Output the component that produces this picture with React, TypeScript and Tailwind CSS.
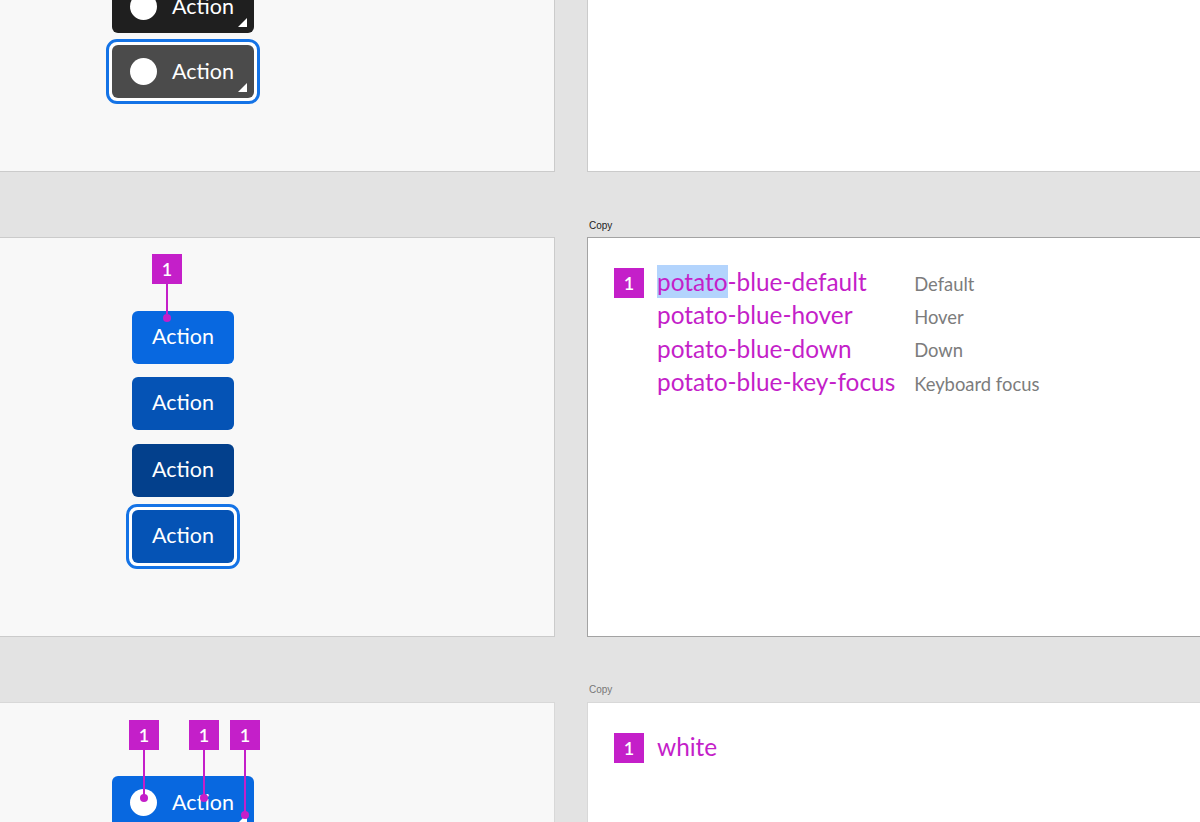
const FONT = "font-['Lato','Open_Sans',sans-serif]";

function Badge({ className = '' }: { className?: string }) {
  return (
    <div className={`flex h-[30px] w-[30px] shrink-0 items-center justify-center bg-[#c41fc9] text-[18px] font-semibold leading-none text-white ${className}`}>
      1
    </div>
  );
}

// annotation: number box, leader line and end dot, laid over the specimen
function Pin({ box, line, dot }: { box: string; line: string; dot: string }) {
  return (
    <>
      <Badge className={`absolute z-10 ${box}`} />
      <div className={`absolute z-10 w-[2px] bg-[#c41fc9] ${line}`} />
      <div className={`absolute z-10 h-[8px] w-[8px] rounded-full bg-[#c41fc9] ${dot}`} />
    </>
  );
}

function Corner() {
  return (
    <svg className="absolute bottom-[6px] right-[7px]" width="9" height="9" viewBox="0 0 9 9">
      <path d="M9 0V9H0Z" fill="#fff" />
    </svg>
  );
}

function IconButton({ color, children }: { color: string; children?: React.ReactNode }) {
  return (
    <div className={`relative flex h-[53px] w-[142px] items-center rounded-[6px] pl-[18px] text-white ${color}`}>
      <div className="h-[27px] w-[27px] rounded-full bg-white" />
      <span className="ml-[15px] text-[21.5px] leading-none">Action</span>
      <Corner />
      {children}
    </div>
  );
}

function TextButton({ color, children }: { color: string; children?: React.ReactNode }) {
  return (
    <div className={`relative flex h-[53px] w-[102px] items-center justify-center rounded-[6px] pb-[2px] text-[21.5px] leading-none text-white ${color}`}>
      Action
      {children}
    </div>
  );
}

function FocusRing({ children }: { children: React.ReactNode }) {
  return <div className="rounded-[11px] border-[3px] border-[#1473e6] bg-white px-[3px] py-[3px]">{children}</div>;
}

const tokens = [
  ['potato-blue-hover', 'Hover'],
  ['potato-blue-down', 'Down'],
  ['potato-blue-key-focus', 'Keyboard focus'],
];

export default function App() {
  return (
    <div className={`flex h-[822px] w-[1200px] flex-col overflow-hidden bg-[#e3e3e3] ${FONT}`}>
      {/* top row */}
      <div className="flex h-[172px] shrink-0 gap-[32px]">
        <div className="flex w-[555px] shrink-0 flex-col justify-end gap-[6px] border-b border-r border-[#cbcbcb] bg-[#f8f8f8] pb-[67px] pl-[106px]">
          <div className="pl-[6px]">
            <IconButton color="bg-[#1f1f1f]" />
          </div>
          <div className="w-fit">
            <FocusRing>
              <IconButton color="bg-[#4b4b4b]" />
            </FocusRing>
          </div>
        </div>
        <div className="flex-1 border-b border-l border-[#cbcbcb] bg-white" />
      </div>

      {/* middle row */}
      <div className="mt-[65px] flex h-[400px] shrink-0 gap-[32px]">
        <div className="flex w-[555px] shrink-0 flex-col gap-[13.4px] border-b border-r border-t border-[#cbcbcb] bg-[#f8f8f8] pl-[132px] pt-[73px]">
          <TextButton color="bg-[#0868e0]">
            <Pin box="left-[20px] top-[-57px]" line="left-[34px] top-[-27px] h-[30px]" dot="left-[31px] top-[3px]" />
          </TextButton>
          <TextButton color="bg-[#0553b5]" />
          <TextButton color="bg-[#03408c]" />
          <div className="ml-[-6px] mt-[-6px] w-fit">
            <FocusRing>
              <TextButton color="bg-[#0553b5]" />
            </FocusRing>
          </div>
        </div>
        <div className="relative flex flex-1 gap-[13px] border-y border-l border-[#a3a3a3] bg-white pl-[26px] pt-[30px]">
          <span className="absolute left-[1px] top-[-17px] font-['Liberation_Sans',sans-serif] text-[10px] leading-none text-[#222]">Copy</span>
          <Badge />
          <div className="mt-[-3px] grid h-fit grid-cols-[auto_auto] justify-start gap-x-[19px] text-[24.4px] leading-[33.4px]">
            <span className="text-[#c41fc9]">
              <span className="inline-block h-[33px] bg-[#b3d4fd]">potato</span>-blue-default
            </span>
            <span className="mt-[4px] self-center text-[18.4px] leading-none text-[#7c7c7c]">Default</span>
            {tokens.map(([name, label]) => (
              <div key={name} className="contents">
                <span className="text-[#c41fc9]">{name}</span>
                <span className="mt-[4px] self-center text-[18.4px] leading-none text-[#7c7c7c]">{label}</span>
              </div>
            ))}
          </div>
        </div>
      </div>

      {/* bottom row */}
      <div className="mt-[65px] flex h-[200px] shrink-0 gap-[32px]">
        <div className="w-[555px] shrink-0 border-r border-t border-[#d8d8d8] bg-[#f8f8f8] pl-[112px] pt-[73px]">
          <IconButton color="bg-[#0868e0]">
            <Pin box="left-[17px] top-[-56px]" line="left-[31px] top-[-26px] h-[48px]" dot="left-[28px] top-[18px]" />
            <Pin box="left-[77px] top-[-56px]" line="left-[91px] top-[-26px] h-[48px]" dot="left-[88px] top-[18px]" />
            <Pin box="left-[118px] top-[-56px]" line="left-[132px] top-[-26px] h-[65px]" dot="left-[129px] top-[35px]" />
          </IconButton>
        </div>
        <div className="relative flex flex-1 items-start gap-[13px] border-l border-t border-[#d8d8d8] bg-white pl-[26px] pt-[30px]">
          <span className="absolute left-[1px] top-[-18px] font-['Liberation_Sans',sans-serif] text-[10px] leading-none text-[#777]">Copy</span>
          <Badge />
          <span className="mt-[-3px] text-[24.4px] leading-[33.4px] text-[#c41fc9]">white</span>
        </div>
      </div>
    </div>
  );
}
